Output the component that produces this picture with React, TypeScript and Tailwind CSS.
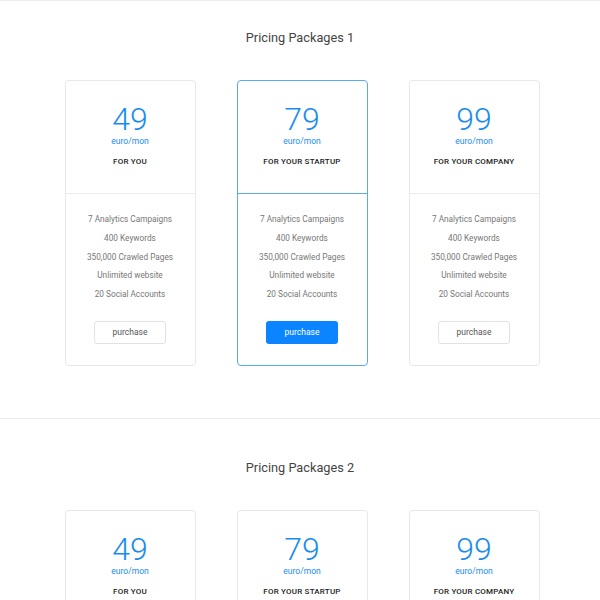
import React from "react";

type Plan = {
  price: string;
  label: string;
  featured?: boolean;
};

const plans: Plan[] = [
  { price: "49", label: "FOR YOU" },
  { price: "79", label: "FOR YOUR STARTUP", featured: true },
  { price: "99", label: "FOR YOUR COMPANY" },
];

const features = [
  "7 Analytics Campaigns",
  "400 Keywords",
  "350,000 Crawled Pages",
  "Unlimited website",
  "20 Social Accounts",
];

const PlanCard = ({ plan, highlight }: { plan: Plan; highlight: boolean }) => {
  const featured = highlight && plan.featured;
  return (
    <div
      className={
        featured
          ? "w-[131px] rounded-[4px] border border-[#5aaaf0] bg-white"
          : "w-[131px] rounded-[4px] border border-[#e8e8e8] bg-white"
      }
    >
      <div
        className={
          featured
            ? "flex flex-col items-center border-b border-[#5aaaf0] pt-[22px] pb-[25px]"
            : "flex flex-col items-center border-b border-[#ececec] pt-[22px] pb-[25px]"
        }
      >
        <div className="text-[32px] leading-[32px] font-light text-[#1a8cf0]">{plan.price}</div>
        <div className="text-[8.5px] leading-[12px] text-[#1a8cf0]">euro/mon</div>
        <div className="mt-[9px] text-[8px] leading-[12px] font-medium tracking-[0.2px] text-[#222]">
          {plan.label}
        </div>
      </div>
      <div className="flex flex-col items-center pt-[16px] pb-[21px]">
        {features.map((f) => (
          <div key={f} className="text-[8.25px] leading-[18.75px] text-[#777]">
            {f}
          </div>
        ))}
        <button
          className={
            featured
              ? "mt-[17px] h-[23px] w-[72px] rounded-[3px] bg-[#0a84ff] text-[8.5px] text-white"
              : "mt-[17px] h-[23px] w-[72px] rounded-[3px] border border-[#e2e2e2] bg-white text-[8.5px] text-[#555]"
          }
        >
          purchase
        </button>
      </div>
    </div>
  );
};

const Section = ({ title, highlight, first }: { title: string; highlight: boolean; first?: boolean }) => (
  <section className={first ? "border-t border-[#ececec] pt-[27px] pb-[52px]" : "border-t border-[#ececec] pt-[39px] pb-[52px]"}>
    <h2 className="text-center text-[12.75px] leading-[20px] text-[#444]">{title}</h2>
    <div className="mt-[32px] ml-[4px] flex justify-center gap-[41px]">
      {plans.map((p) => (
        <PlanCard key={p.price} plan={p} highlight={highlight} />
      ))}
    </div>
  </section>
);

export default function App() {
  return (
    <div className="min-h-[600px] bg-white font-['Roboto',sans-serif]">
      <Section title="Pricing Packages 1" highlight={true} first />
      <Section title="Pricing Packages 2" highlight={false} />
    </div>
  );
}
